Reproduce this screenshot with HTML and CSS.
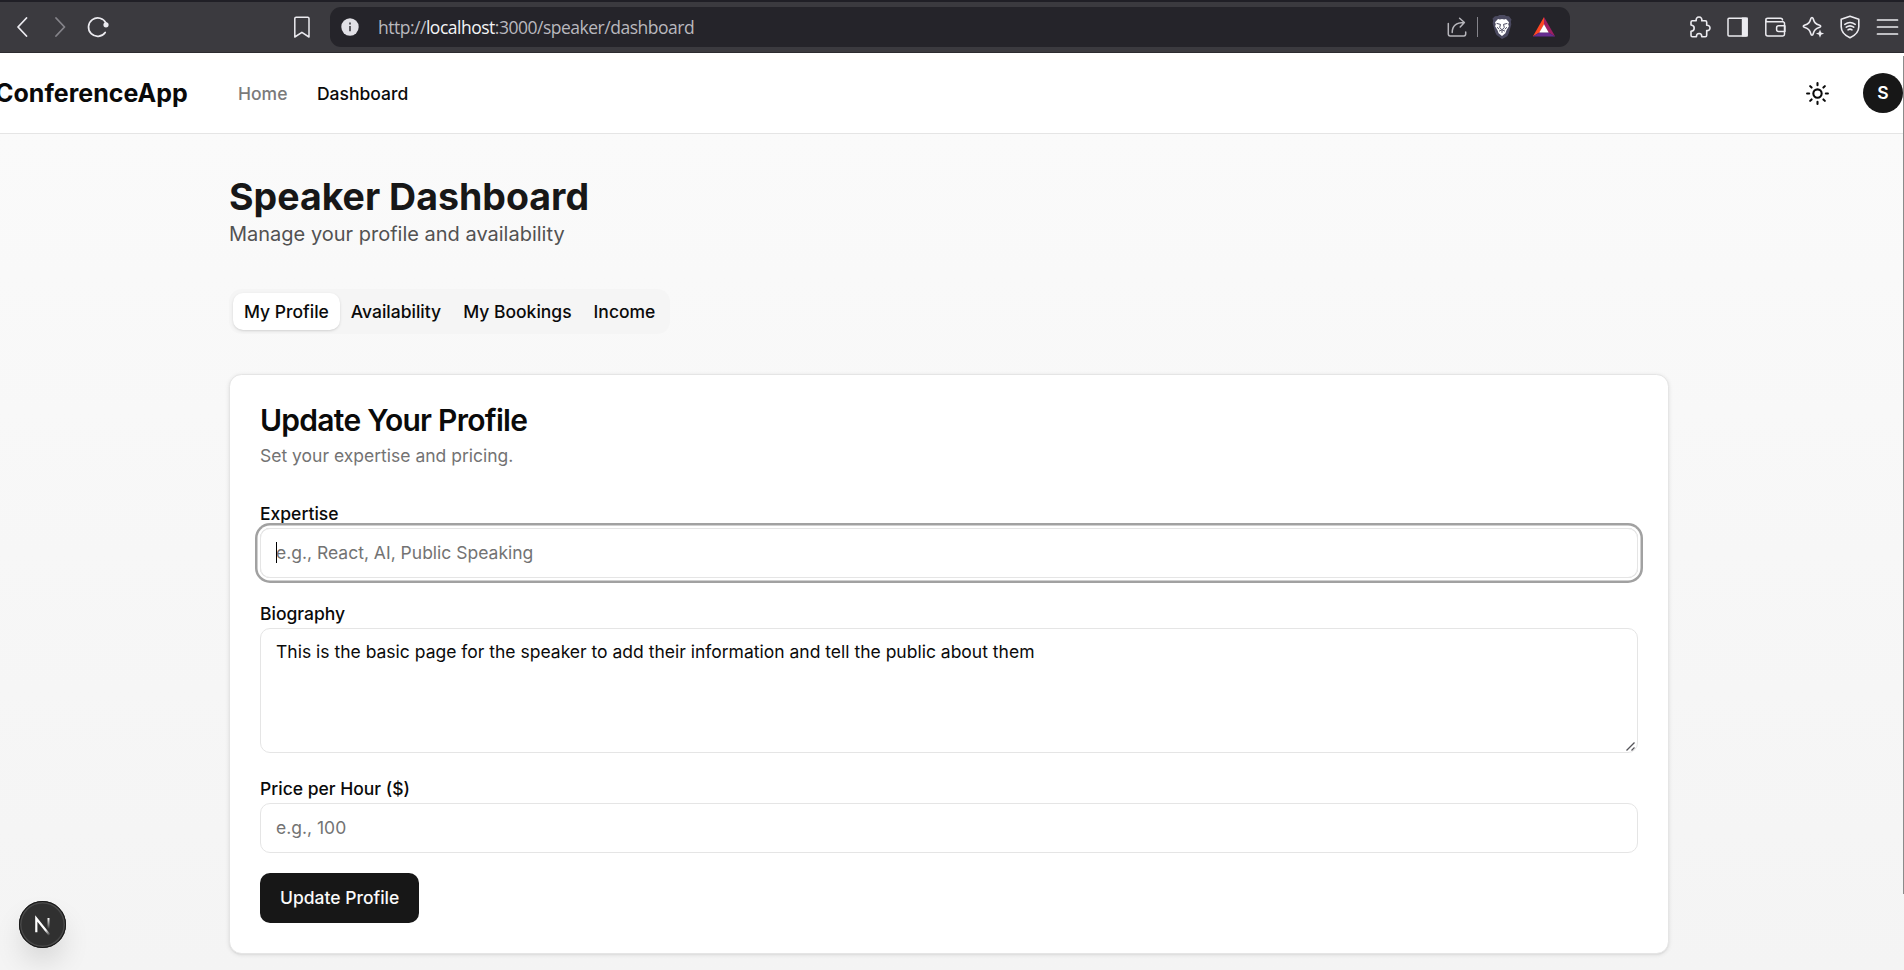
FILE: index.html
```html
<!DOCTYPE html>
<html lang="en">
<head>
<meta charset="utf-8">
<title>ConferenceApp - Speaker Dashboard</title>
<link rel="stylesheet" href="styles.css">
</head>
<body>
<div class="toolbar">
  <div class="tools-left">
    <svg class="ico" viewBox="0 0 24 24"><path d="M16.500 3 8 12l8.500 9" stroke-width="1.800"/></svg>
    <svg class="ico dim" viewBox="0 0 24 24"><path d="M8 3l8.500 9L8 21" stroke-width="1.800"/></svg>
    <svg class="ico" viewBox="0 0 24 24"><path d="M20 8.200A9.200 9.200 0 1 0 19.200 17.500" stroke-width="1.700"/><circle cx="20" cy="9.800" r="2.600" class="solid"/></svg>
    <svg class="ico bookmark" viewBox="0 0 24 24"><path d="M4.800 3.600q0-1.300 1.300-1.300h11.600q1.300 0 1.300 1.300v18.400l-7.100-4.700-7.100 4.700z" stroke-width="1.500"/></svg>
  </div>
  <div class="address">
    <svg class="info" viewBox="0 0 18 18"><circle cx="9" cy="9" r="8.700" fill="#e1e0e6"/><path d="M9 8v5.200M9 4.600v1.900" stroke="#55545b" stroke-width="1.900"/></svg>
    <span class="url">http://<b>localhost</b>:3000/speaker/dashboard</span>
    <svg class="ico share" viewBox="0 0 24 24"><path d="M3.300 8.500v10.600q0 1.800 1.800 1.800h13.800q1.800 0 1.800-1.800v-2M7.200 17.500c0-6.500 4-10 12-10M14.600 3.200l4.800 4.300-4.200 4.500" stroke-width="1.500"/></svg>
    <span class="divider"></span>
    <svg class="ico lion" viewBox="0 0 24 24"><path d="m8 1 1.200-1h5.600L16 1l3 .3 2.500 3.200-.6 2 .4 3-2.600 9q-.7 2.300-2.700 3.500L12 24l-4-3q-2-1.200-2.700-3.500l-2.600-9 .4-3-.6-2L5 1.300z" fill="#4b4a60" stroke="none"/><path d="m8 4 1.800.5L12 4l2.200.5L16 4l3 3.200-.8 2 .7 2-2.400 4-1.100 3L12 21l-3.400-2.800-1.100-3-2.400-4 .7-2-.8-2z" fill="#fff" stroke="none"/><path d="M7 8.500l3.500.9-.8 3 1.400 1.600M17 8.500l-3.500.9.8 3-1.400 1.600M9.400 16l2.600-1.400 2.600 1.400M12 15v2.500M7.500 12.500l1.300 1.500M16.500 12.500 15.200 14" stroke="#4b4a60" stroke-width="1"/></svg>
    <svg class="ico bat" viewBox="0 0 24 24"><path d="M12 2 .8 21.500 7.800 17.200 12 9.300z" fill="#ff4724" stroke="none"/><path d="M12 2v7.300l4.200 7.900 7 4.300z" fill="#9e1f63" stroke="none"/><path d="m.8 21.500 7-4.300h8.400l7 4.300z" fill="#662d91" stroke="none"/><path d="m12 9.300 4.700 8.300H7.300z" fill="#fff" stroke="none"/></svg>
  </div>
  <div class="tools-right">
    <svg class="ico" viewBox="0 0 24 24"><path d="M3 7.200q0-1.400 1.400-1.400h3.800c-.4-2 .7-3.800 2.800-3.800s3.200 1.800 2.800 3.800h3.500q1.400 0 1.400 1.400v3.100c1.700-.3 3.300.8 3.300 2.600s-1.600 3-3.300 2.600v4.800q0 1.400-1.400 1.400h-3.500c0-1.800-1-3.200-2.700-3.200s-2.700 1.400-2.700 3.200h-4q-1.400 0-1.400-1.400v-4c2-.1 3.200-1.500 3.200-3.200S5 10.200 3 10z" stroke-width="1.600"/></svg>
    <svg class="ico" viewBox="0 0 24 24"><rect x="2" y="3.200" width="19" height="17.800" rx="1" stroke-width="1.500"/><path d="M15.800 2.500h6v19h-6z" class="solid"/></svg>
    <svg class="ico" viewBox="0 0 24 24"><path d="M20.300 6.700H4.800C2.200 6.500 2.200 3.200 4.800 3.200h12.700q2 0 2 1.800M2.800 5v14q0 2 2 2h15q1.700 0 1.700-1.700V8.500q0-1.800-1.700-1.800M22 10.700h-6.400q-2 0-2 2v1.800q0 2 2 2H22z" stroke-width="1.500"/></svg>
    <svg class="ico" viewBox="0 0 24 24"><path d="M11 2.500q.8 0 1.100 1c1.200 4 2.200 5.300 6.600 6.800 1.300.5 1.300 1.500 0 2-4.400 1.500-5.400 2.800-6.600 6.800-.3 1.300-1.900 1.300-2.200 0-1.200-4-2.200-5.300-6.600-6.800-1.300-.5-1.300-1.500 0-2 4.400-1.500 5.400-2.800 6.600-6.800q.3-1 1.100-1z" stroke-width="1.600"/><path d="m19 14.500 1.100 3 3 1.100-3 1.100-1.100 3-1.100-3-3-1.100 3-1.100z" class="solid"/></svg>
    <svg class="ico" viewBox="0 0 24 24"><path d="m12 1.200 8.800 3v7.500c0 5.200-4 8.800-8.800 11-4.800-2.200-8.800-5.800-8.800-11V4.200zM6.800 9.400q5.200-3.800 10.400 0M8.300 12.200q3.700-2.700 7.400 0M10 14.800q2-1.300 4 0" stroke-width="1.600"/></svg>
    <svg class="ico" viewBox="0 0 24 24"><path d="M1.500 5h20M1.500 12h20M1.500 19h20" stroke-width="1.700"/></svg>
  </div>
</div>
<header class="site-header">
  <div class="brand">ConferenceApp</div>
  <nav class="nav"><a class="muted">Home</a><a>Dashboard</a></nav>
  <svg class="sun" viewBox="0 0 24 24"><circle cx="12" cy="12" r="4"/><path d="M12 2v2M12 20v2M4.930 4.930l1.410 1.410M17.660 17.660l1.410 1.410M2 12h2M20 12h2M6.340 17.660l-1.410 1.410M19.070 4.930l-1.410 1.410"/></svg>
  <div class="avatar">S</div>
</header>
<main class="page">
  <div class="container">
    <h1 class="title">Speaker Dashboard</h1>
    <p class="subtitle">Manage your profile and availability</p>
    <div class="tabs">
      <span class="tab active">My Profile</span><span class="tab">Availability</span><span class="tab">My Bookings</span><span class="tab">Income</span>
    </div>
    <section class="card">
      <h2 class="card-title">Update Your Profile</h2>
      <p class="card-text">Set your expertise and pricing.</p>
      <div class="form">
        <div class="group"><span class="label">Expertise</span><div class="field focused"><span class="caret"></span>e.g., React, AI, Public Speaking</div></div>
        <div class="group"><span class="label">Biography</span><div class="field area">This is the basic page for the speaker to add their information and tell the public about them<svg class="grip" viewBox="0 0 9 9"><path d="M.5 8.500l8-8M5.500 8.500l3-3"/></svg></div></div>
        <div class="group"><span class="label">Price per Hour ($)</span><div class="field">e.g., 100</div></div>
        <button class="submit">Update Profile</button>
      </div>
    </section>
  </div>
</main>
<div class="scroll-thumb"></div>
<div class="dev-badge">
  <svg viewBox="0 0 47 47">
    <defs>
      <linearGradient id="diag" gradientUnits="userSpaceOnUse" x1="24" y1="25" x2="31" y2="34"><stop offset="0.400" stop-color="#fff"/><stop offset="1" stop-color="#fff" stop-opacity="0"/></linearGradient>
      <linearGradient id="stem" gradientUnits="userSpaceOnUse" x1="0" y1="17" x2="0" y2="28"><stop offset="0" stop-color="#fff"/><stop offset="1" stop-color="#fff" stop-opacity="0"/></linearGradient>
    </defs>
    <path d="M17.300 31.200V17.500L30.500 34" fill="none" stroke="url(#diag)" stroke-width="2.200"/>
    <path d="M29.500 17v11" stroke="url(#stem)" stroke-width="2"/>
  </svg>
</div>
</body>
</html>
```
FILE: styles.css
```css
* { box-sizing: border-box; margin: 0; padding: 0; }
body {
  height: 970px;
  overflow: hidden;
  display: flex;
  flex-direction: column;
  font-family: Inter, "Liberation Sans", sans-serif;
  font-size: 17.5px;
  color: #0a0a0a;
  background: #fafafa;
}

/* Browser toolbar */
.toolbar {
  flex: none;
  height: 53px;
  display: flex;
  align-items: center;
  background: #3b3a3f;
  border-top: 2px solid #201f26;
  border-bottom: 1px solid #2c2b30;
}
.ico {
  flex: none;
  width: 24px;
  height: 24px;
  fill: none;
  stroke: #ecebf0;
  stroke-linecap: round;
  stroke-linejoin: round;
}
.ico .solid { fill: #ecebf0; stroke: none; }
.dim { stroke: #85848a; }
.tools-left { flex: none; width: 330px; display: flex; gap: 14px; padding-left: 10px; }
.bookmark { margin-left: 166px; }
.address {
  flex: none;
  width: 1240px;
  height: 40px;
  display: flex;
  align-items: center;
  padding: 0 11px;
  border-radius: 11px;
  background: #25242a;
}
.info { flex: none; width: 18px; height: 18px; }
.url {
  flex: none;
  width: 1067px;
  margin-left: 19px;
  font-family: "Open Sans", "Noto Sans", sans-serif;
  font-size: 17.5px;
  line-height: 24px;
  letter-spacing: -0.490px;
  color: #b9b8be;
}
.url b { font-weight: 400; color: #f4f4f6; }
.share { stroke: #b6b5bb; }
.divider { width: 1px; height: 20px; margin: 0 12px 0 8px; background: #85848b; }
.bat { margin-left: 18px; }
.tools-right { display: flex; gap: 13.500px; margin-left: 118px; }

/* Site header */
.site-header {
  flex: none;
  height: 81px;
  display: flex;
  align-items: center;
  background: #fff;
  border-bottom: 1px solid #e5e5e5;
}
.brand { margin-left: -5px; width: 243px; font-size: 25px; font-weight: 700; white-space: nowrap; }
.nav { display: flex; gap: 29.500px; font-weight: 500; }
.nav .muted { color: #7a7a7a; }
.sun {
  width: 25px;
  height: 25px;
  margin-left: auto;
  margin-right: 33px;
  fill: none;
  stroke: #0a0a0a;
  stroke-width: 2;
  stroke-linecap: round;
}
.avatar {
  width: 40px;
  height: 40px;
  margin-right: 1px;
  border-radius: 50%;
  background: #171717;
  color: #fff;
  font-weight: 600;
  line-height: 40px;
  text-align: center;
}

/* Dashboard */
.page { flex: 1; padding-top: 40px; background: linear-gradient(#fafafa, #f4f4f4); }
.container { width: 1440px; margin-left: 229px; }
.title { font-size: 37.500px; line-height: 45px; font-weight: 700; color: #171717; }
.subtitle { font-size: 20px; line-height: 30px; color: #525252; }
.tabs {
  width: fit-content;
  height: 45px;
  display: flex;
  margin: 40px 0;
  padding: 4px;
  border-radius: 12.500px;
  background: #f5f5f5;
}
.tab { padding: 0 11px; border-radius: 10px; line-height: 37px; font-weight: 500; }
.active { background: #fff; box-shadow: 0 1px 3px rgba(0, 0, 0, .12), 0 1px 2px -1px rgba(0, 0, 0, .1); }
.card {
  padding: 30px;
  border: 1px solid #e5e5e5;
  border-radius: 12.500px;
  background: #fff;
  box-shadow: 0 1px 4px rgba(0, 0, 0, .1), 0 1px 2px -1px rgba(0, 0, 0, .1);
}
.card-title { font-size: 30px; line-height: 30px; font-weight: 600; letter-spacing: -0.730px; }
.card-text { margin: 7.500px 0 30px; line-height: 25px; color: #737373; }
.form { display: flex; flex-direction: column; gap: 20px; }
.label { display: block; line-height: 32px; height: 30px; font-weight: 500; }
.field {
  position: relative;
  height: 50px;
  padding: 0 15px;
  border: 1px solid #e5e5e5;
  border-radius: 10px;
  line-height: 48px;
  color: #737373;
}
.focused { box-shadow: 0 0 0 2.500px #fff, 0 0 0 5px #a1a1a1; }
.caret { position: absolute; left: 15px; top: 13px; width: 1px; height: 21px; background: #000; }
.area { height: 125px; padding-top: 10px; line-height: 25px; color: #0a0a0a; }
.grip { position: absolute; right: 2px; bottom: 1px; width: 9px; height: 9px; fill: none; stroke: #55545a; stroke-width: 1.300; }
.submit {
  align-self: flex-start;
  height: 50px;
  padding: 0 20px;
  border: 0;
  border-radius: 10px;
  background: #171717;
  color: #fafafa;
  font: 500 17.500px Inter, sans-serif;
}

/* Overlays */
.scroll-thumb { position: fixed; right: 0; top: 56px; width: 1px; height: 838px; background: #8b8b8b; }
.dev-badge {
  position: fixed;
  left: 19px;
  top: 901px;
  width: 47px;
  height: 47px;
  border-radius: 50%;
  background: #303030;
  box-shadow: inset 0 0 0 1px #171717, inset 0 0 0 2.500px #484848, 0 16px 32px -8px rgba(0, 0, 0, .24);
}
.dev-badge svg { display: block; width: 47px; height: 47px; }
```
